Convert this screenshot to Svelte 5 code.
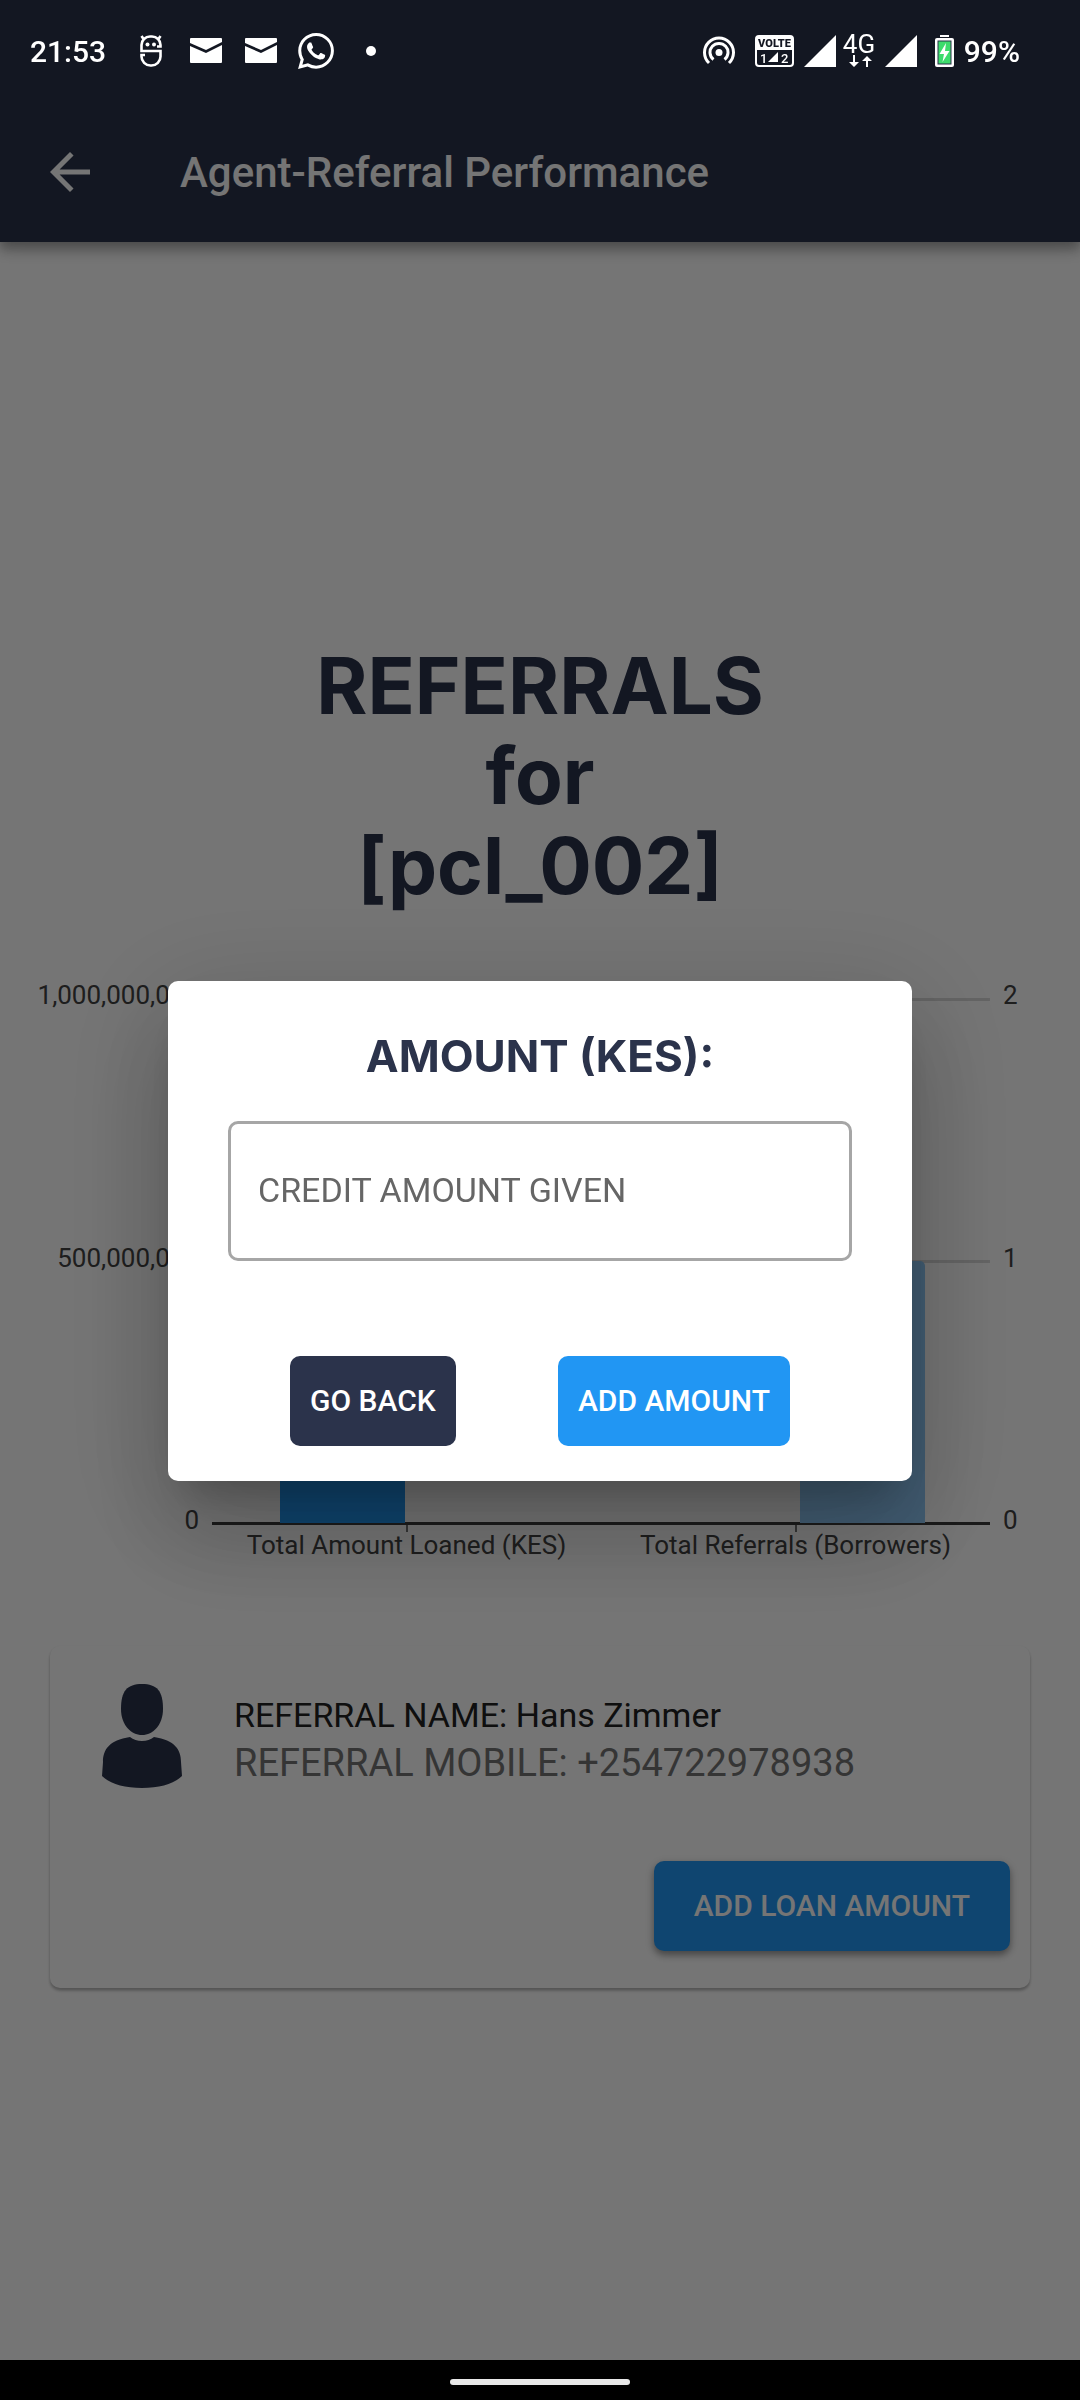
<script>
  let amount = $state('');
  const referral = { agent: 'pcl_002', name: 'Hans Zimmer', mobile: '+254722978938' };
  const leftTicks = ['1,000,000,000', '500,000,000', '0'];
  const rightTicks = ['2', '1', '0'];
  const categories = [
    { label: 'Total Amount Loaned (KES)', loaned: 60, referred: 0 },
    { label: 'Total Referrals (Borrowers)', loaned: 0, referred: 50 }
  ];
</script>

{#snippet mail()}
  <svg class="glyph" viewBox="0 0 36 36" aria-hidden="true">
    <path d="M3 5h30q1 0 1 1v3L18 17 2 10V6q0-1 1-1z" />
    <path d="M2 13l16 7 16-8v17q0 1-1 1H3q-1 0-1-1z" />
  </svg>
{/snippet}

{#snippet signal()}
  <svg class="signal" viewBox="0 0 32 32" aria-hidden="true"><path d="M32 0v32H0z" /></svg>
{/snippet}

<div class="screen">
  <div class="status">
    <div class="notifications">
      <span class="time">21:53</span>
      <svg class="glyph line" viewBox="0 0 36 36" aria-hidden="true">
        <path d="M24 13.500H27.500V12A8.500 8.500 0 0 0 19 3.500H17A8.500 8.500 0 0 0 8.500 12V18H27.500V23.500A9 9 0 0 1 18.500 32.500H17.500A9 9 0 0 1 8.500 23.500V22H12" />
        <path d="M10.500 6L8.500 3M25.500 6l2-3" />
        <circle class="solid" cx="14.500" cy="11.500" r="2" /><circle class="solid" cx="21" cy="11.500" r="2" />
      </svg>
      {@render mail()}
      {@render mail()}
      <svg class="glyph" viewBox="0 0 24 24" aria-hidden="true">
        <path d="M17.472 14.382c-.297-.149-1.758-.867-2.030-.967-.273-.099-.471-.148-.670.150-.197.297-.767.966-.940 1.164-.173.199-.347.223-.644.075-.297-.150-1.255-.463-2.390-1.475-.883-.788-1.480-1.761-1.653-2.059-.173-.297-.018-.458.130-.606.134-.133.298-.347.446-.520.149-.174.198-.298.298-.497.099-.198.050-.371-.025-.520-.075-.149-.669-1.612-.916-2.207-.242-.579-.487-.500-.669-.510-.173-.008-.371-.010-.570-.010-.198 0-.520.074-.792.372-.272.297-1.040 1.016-1.040 2.479 0 1.462 1.065 2.875 1.213 3.074.149.198 2.096 3.200 5.077 4.487.709.306 1.262.489 1.694.625.712.227 1.360.195 1.871.118.571-.085 1.758-.719 2.006-1.413.248-.694.248-1.289.173-1.413-.074-.124-.272-.198-.570-.347m-5.421 7.403h-.004a9.870 9.870 0 0 1-5.031-1.378l-.361-.214-3.741.982.998-3.648-.235-.374a9.860 9.860 0 0 1-1.510-5.260c.001-5.450 4.436-9.884 9.888-9.884 2.640 0 5.122 1.030 6.988 2.898a9.825 9.825 0 0 1 2.893 6.994c-.003 5.450-4.437 9.884-9.885 9.884m8.413-18.297A11.815 11.815 0 0 0 12.050 0C5.495 0 .160 5.335.157 11.892c0 2.096.547 4.142 1.588 5.945L.057 24l6.305-1.654a11.882 11.882 0 0 0 5.683 1.448h.005c6.554 0 11.890-5.335 11.893-11.893a11.821 11.821 0 0 0-3.480-8.413z" />
      </svg>
      <svg class="glyph" viewBox="0 0 36 36" aria-hidden="true"><circle cx="18" cy="18" r="5" /></svg>
    </div>
    <div class="system">
      <svg class="cast" viewBox="0 0 32 32" aria-hidden="true">
        <circle cx="16" cy="17.500" r="3.500" />
        <path class="arc" d="M10.500 24.500a9 9 0 1 1 11 0M6 28a14.500 14.500 0 1 1 20 0" />
      </svg>
      <svg class="volte" viewBox="0 0 39 32" aria-hidden="true">
        <rect class="arc thin" x="1" y="1" width="37" height="30" rx="3" />
        <path d="M1 3q0-2 2-2h33q2 0 2 2v12H1z" />
        <text class="dark" x="19.500" y="12" text-anchor="middle">VOLTE</text>
        <text class="sim" x="5" y="27.500">1</text>
        <path d="M23 17v10H13z" />
        <text class="sim" x="26" y="27.500">2</text>
      </svg>
      {@render signal()}
      <svg class="network" viewBox="0 -8 34 50" aria-hidden="true">
        <text x="17" y="19" text-anchor="middle">4G</text>
        <path d="M11 21h2v7h4l-5 5-5-5h4zM24 33h2v-6h4l-5-5-5 5h4z" />
      </svg>
      {@render signal()}
      <svg class="battery" viewBox="0 0 19 32" aria-hidden="true">
        <path d="M5 0h9v2H5z" /><rect y="3" width="19" height="29" rx="2" />
        <rect class="charge" x="3" y="6" width="13" height="23" />
        <path d="M11 8L4.500 19H9l-1.500 8L14.500 16H10z" />
      </svg>
      <span class="time">99%</span>
    </div>
  </div>

  <header>
    <button class="back" aria-label="Back">
      <svg viewBox="0 0 24 24" aria-hidden="true"><path d="M20 11H7.830l5.590-5.590L12 4l-8 8 8 8 1.410-1.410L7.830 13H20v-2z" /></svg>
    </button>
    <h1>Agent-Referral Performance</h1>
  </header>

  <main>
    <h2>REFERRALS<br />for<br />[{referral.agent}]</h2>

    <section class="chart" aria-label="Referral performance">
      <div class="axis left">{#each leftTicks as t}<span>{t}</span>{/each}</div>
      <div class="middle">
        <div class="plot">
          <div class="lines"><i></i><i></i><i></i></div>
          <div class="groups">
            {#each categories as c}
              <div class="group">
                <div class="bar loaned" style="height: {c.loaned}%"></div>
                <div class="bar referred" style="height: {c.referred}%"></div>
              </div>
            {/each}
          </div>
        </div>
        <div class="labels">{#each categories as c}<span>{c.label}</span>{/each}</div>
      </div>
      <div class="axis right">{#each rightTicks as t}<span>{t}</span>{/each}</div>
    </section>

    <article class="card">
      <div class="person">
        <svg viewBox="0 0 80 104" aria-hidden="true">
          <path d="M40 0C55 0 61 7 61 25 61 41 51 51 40 51S19 41 19 25C19 7 25 0 40 0z" />
          <path d="M28 53q5 4 12 4t12-4C73 56 79 66 79 78l1 14c-8 8-22 12-40 12S8 100 0 92l1-14C1 66 7 56 28 53z" />
        </svg>
        <div>
          <p class="name">REFERRAL NAME: {referral.name}</p>
          <p class="mobile">REFERRAL MOBILE: {referral.mobile}</p>
        </div>
      </div>
      <button class="action primary wide">ADD LOAN AMOUNT</button>
    </article>
  </main>

  <div class="scrim">
    <form class="dialog" role="dialog" aria-labelledby="dialog-title" onsubmit={(e) => e.preventDefault()}>
      <h3 id="dialog-title">AMOUNT (KES):</h3>
      <input bind:value={amount} inputmode="numeric" placeholder="CREDIT AMOUNT GIVEN" aria-label="Credit amount given" />
      <div class="actions">
        <button class="action" type="button">GO BACK</button>
        <button class="action primary" type="submit">ADD AMOUNT</button>
      </div>
    </form>
  </div>

  <div class="nav"><span></span></div>
</div>

<style>
  :global(body) { margin: 0; background: #fff; }
  * { box-sizing: border-box; }
  h1, h2, h3, p { margin: 0; }
  button, input { font: inherit; border: 0; }
  svg { display: block; flex: none; fill: currentColor; }
  .screen { display: flex; flex-direction: column; min-height: 100vh; font-family: Roboto, 'Liberation Sans', sans-serif; color: #212121; }

  .status { position: fixed; inset: 0 0 auto; z-index: 3; display: flex; justify-content: space-between; align-items: center; height: 102px; padding: 0 60px 0 30px; color: #fff; }
  .notifications { display: flex; align-items: center; gap: 19px; }
  .notifications .time { margin-right: 8px; }
  .system { display: flex; align-items: center; gap: 10px; }
  .time { font-size: 30px; font-weight: 500; }
  .glyph { width: 36px; height: 36px; }
  .line { fill: none; stroke: currentColor; stroke-width: 2.6; }
  .solid { fill: currentColor; stroke: none; }
  .cast { width: 32px; height: 32px; margin-right: 10px; }
  .arc { fill: none; stroke: currentColor; stroke-width: 3; }
  .thin { stroke-width: 2; }
  .volte { width: 39px; height: 32px; }
  .volte text { font-size: 11px; font-weight: 900; }
  .dark { fill: #141722; }
  .volte .sim { font-size: 13px; font-weight: 500; }
  .signal { width: 32px; height: 32px; }
  .network { width: 34px; height: 50px; margin: 0 -1px 0 -4px; }
  .network text { font-size: 26px; }
  .battery { width: 19px; height: 32px; margin-left: 8px; }
  .charge { fill: #3ddc6c; stroke: #2b334b; stroke-width: 1; }

  header { position: relative; display: flex; align-items: center; gap: 80px; height: 242px; padding: 102px 40px 0; background: #2b334b; color: #fff; box-shadow: 0 5px 10px rgba(0, 0, 0, .2), 0 10px 12px rgba(0, 0, 0, .14), 0 2px 24px rgba(0, 0, 0, .12); }
  .back { padding: 0; background: none; color: inherit; }
  .back svg { width: 60px; height: 60px; }
  h1 { font-size: 42px; font-weight: 500; }

  main { flex: 1; padding: 399px 50px 80px; }
  h2 { font: 700 78px/90px Inter, 'Open Sans', sans-serif; color: #2b334b; text-align: center; }

  .chart { display: grid; grid-template-columns: 149px 1fr 27px; gap: 13px; margin-top: 69px; font-size: 26px; line-height: 30px; color: #424242; }
  .axis { display: flex; flex-direction: column; justify-content: space-between; height: 555px; }
  .left { align-items: flex-end; white-space: nowrap; }
  .middle { padding-top: 18px; }
  .plot { display: grid; height: 527px; }
  .lines, .groups { grid-area: 1 / 1; }
  .lines { display: flex; flex-direction: column; justify-content: space-between; }
  .lines i { height: 3px; background: #d9d9d9; }
  .lines i:last-child { background: #3a3a3a; }
  .groups { display: grid; grid-template-columns: 1fr 1fr; height: 525px; }
  .group { display: grid; grid-template-columns: 1fr 1fr; gap: 6px; align-items: end; padding: 0 65px 0 68px; }
  .bar { border-radius: 5px 5px 0 0; }
  .loaned { background: #2196f3; }
  .referred { background: #90caf9; }
  .labels { display: grid; grid-template-columns: 1fr 1fr; line-height: 26px; text-align: center; white-space: nowrap; }
  .labels span::before { content: ''; display: block; width: 2px; height: 7px; margin: 0 auto; background: #757575; }

  .card { margin-top: 88px; padding: 38px 20px 37px 52px; border-radius: 10px; background: #fff; box-shadow: 0 3px 3px rgba(0, 0, 0, .22), 0 1px 3px rgba(0, 0, 0, .1); }
  .person { display: flex; align-items: flex-end; gap: 52px; margin-bottom: 73px; }
  .person svg { width: 80px; height: 104px; color: #2b334b; }
  .name { font-size: 34px; line-height: 42px; padding-bottom: 2px; }
  .mobile { font-size: 38px; line-height: 50px; color: #757575; }

  .action { display: block; height: 90px; padding: 0 20px 2px; border-radius: 10px; background: #2b334b; color: #fff; font-size: 30px; font-weight: 500; white-space: nowrap; }
  .primary { background: #2196f3; }
  .wide { margin-left: auto; padding: 0 40px 2px; box-shadow: 0 4px 6px rgba(0, 0, 0, .3), 0 3px 12px rgba(0, 0, 0, .16); }

  .scrim { position: fixed; inset: 0; z-index: 2; display: flex; align-items: center; padding: 102px 168px 40px; background: rgba(0, 0, 0, .54); }
  .dialog { width: 100%; padding: 50px 60px 35px; border-radius: 10px; background: #fff; box-shadow: 0 27px 38px -17px rgba(0, 0, 0, .2), 0 60px 95px 7px rgba(0, 0, 0, .14), 0 22px 115px 20px rgba(0, 0, 0, .12); }
  h3 { font: 700 44px/50px Inter, 'Open Sans', sans-serif; color: #2b334b; text-align: center; }
  input { display: block; width: 100%; height: 140px; margin: 40px 0 95px; padding: 0 27px 2px; border: 3px solid #a6a6a6; border-radius: 10px; background: #fff; font-size: 34px; color: #212121; }
  input::placeholder { color: #666; opacity: 1; }
  .actions { display: flex; justify-content: space-between; padding: 0 62px; }

  .nav { position: fixed; inset: auto 0 0; z-index: 3; display: flex; align-items: center; justify-content: center; height: 40px; padding-top: 4px; background: #000; }
  .nav span { width: 180px; height: 6px; border-radius: 3px; background: #e8e8e8; }
</style>
